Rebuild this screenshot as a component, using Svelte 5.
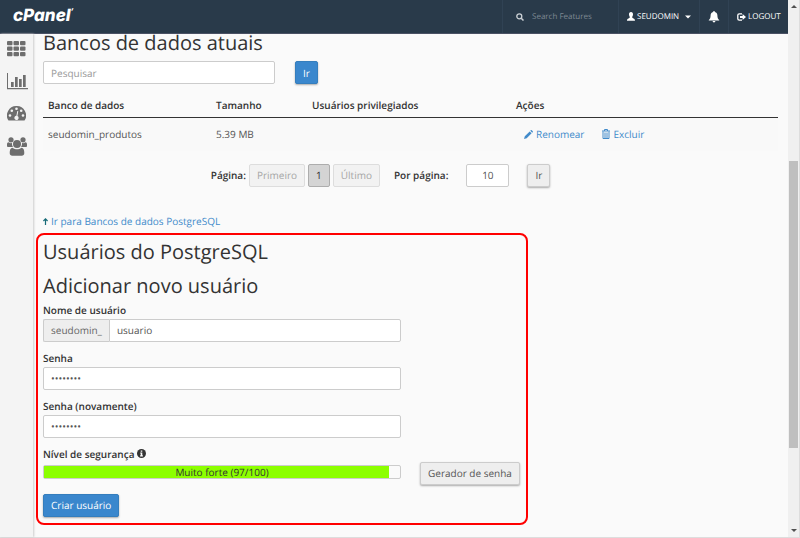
<script lang="ts">
	let search = $state('');
	let perPage = $state('10');
	let username = $state('usuario');
	let password = $state('a7Kp92xQ');
	let passwordAgain = $state('a7Kp92xQ');

	const prefix = 'seudomin_';
	const strength = 97;

	const databases = [{ name: 'seudomin_produtos', size: '5.39 MB', users: '' }];

	const bars = [
		{ x: 4, h: 5 },
		{ x: 8, h: 10 },
		{ x: 12, h: 8 },
		{ x: 16, h: 12 }
	];
</script>

<div class="window">
	<div class="app">
		<header>
			<a class="logo" href="#home">cPanel<sup>’</sup></a>
			<label class="top-search">
				<svg width="8" height="8" viewBox="0 0 8 8" aria-hidden="true">
					<circle cx="3.3" cy="3.3" r="2.5" fill="none" stroke="currentColor" stroke-width="1.3" />
					<path d="M5.2 5.2 7.5 7.5" stroke="currentColor" stroke-width="1.5" />
				</svg>
				<input type="text" placeholder="Search Features" aria-label="Search Features" />
			</label>
			<button class="top-item user" type="button">
				<svg width="8" height="9" viewBox="0 0 8 9" fill="currentColor" aria-hidden="true">
					<path
						d="M4 0C5.400 0 6.100 1 6 2.600 5.900 4 5.300 4.600 5.100 5.300 5.100 6.300 8 6.300 8 8.700H0C0 6.300 2.900 6.300 2.900 5.300 2.700 4.600 2.100 4 2 2.600 1.900 1 2.600 0 4 0Z"
					/>
				</svg>
				<span>SEUDOMIN</span>
				<svg class="caret" width="6" height="4" viewBox="0 0 6 4" fill="currentColor" aria-hidden="true">
					<path d="M0 .5h6L3 3.500Z" />
				</svg>
			</button>
			<button class="top-item bell" type="button" aria-label="Notifications">
				<svg width="12" height="12" viewBox="0 0 12 12" fill="currentColor" aria-hidden="true">
					<path
						d="M6 0c.6 0 .9.4.9.9C8.600 1.300 9.400 2.600 9.400 4.400c0 2.300.6 3.600 1.800 4.500v.7H.8v-.7C2 8 2.600 6.700 2.600 4.400c0-1.800.8-3.100 2.500-3.500C5.100.4 5.400 0 6 0ZM4.600 10h2.800a1.400 1.400 0 0 1-2.800 0Z"
					/>
				</svg>
			</button>
			<a class="top-item logout" href="#logout">
				<svg width="9" height="8" viewBox="0 0 9 8" aria-hidden="true">
					<path
						d="M5 .8H2.200A1.400 1.400 0 0 0 .8 2.200v3.600a1.400 1.400 0 0 0 1.400 1.400H5"
						fill="none"
						stroke="currentColor"
						stroke-width="1.300"
					/>
					<path d="M3 3h2.600V1L9 4 5.600 7V5H3Z" fill="currentColor" />
				</svg>
				<span>LOGOUT</span>
			</a>
		</header>

		<div class="body">
			<nav aria-label="Menu">
				<a href="#home" aria-label="Home">
					<svg width="19" height="16" viewBox="0 0 19 16" fill="currentColor">
						{#each [0, 5.5, 11] as y (y)}
							{#each [0, 6.5, 13] as x (x)}
								<rect {x} {y} width="5.500" height="4.300" rx="1" />
							{/each}
						{/each}
					</svg>
				</a>
				<a href="#stats" aria-label="Statistics">
					<svg width="21" height="17" viewBox="0 0 21 17" fill="currentColor">
						<path d="M0 0h1v15h20v1.300H0Z" />
						{#each bars as bar (bar.x)}
							<rect x={bar.x} y={14 - bar.h} width="2.700" height={bar.h} />
						{/each}
					</svg>
				</a>
				<a href="#dashboard" aria-label="Dashboard">
					<svg width="19" height="15" viewBox="0 0 19 15" fill="currentColor">
						<path d="M9.500 0A9.400 9.400 0 0 0 1.500 14.600H17.500A9.400 9.400 0 0 0 9.500 0Z" />
						<g fill="#f4f4f4">
							<circle cx="3" cy="9.500" r="1.300" />
							<circle cx="4.800" cy="4.800" r="1.300" />
							<circle cx="9.500" cy="2.800" r="1.300" />
							<circle cx="14.200" cy="4.800" r="1.300" />
							<circle cx="16" cy="9.500" r="1.300" />
							<path d="m10.300 5 1 .2-.9 4.800a2.100 2.100 0 1 1-1-.2Z" />
						</g>
					</svg>
				</a>
				<a href="#users" aria-label="User manager">
					<svg width="20" height="19" viewBox="0 0 20 19" fill="currentColor">
						<circle cx="4" cy="2.800" r="2.600" />
						<circle cx="16" cy="2.800" r="2.600" />
						<path
							d="M0 9V7.500C0 6 .6 5.300 1.700 5.300 3 6.400 4 6.300 5 6.100 4.800 8 5.400 9 6 10H1.500C.5 10 0 9.700 0 9ZM20 9V7.500C20 6 19.400 5.300 18.300 5.300 17 6.400 16 6.300 15 6.100 15.200 8 14.600 9 14 10h4.500C19.500 10 20 9.700 20 9Z"
						/>
						<circle cx="10" cy="7" r="4" />
						<path
							d="M5.600 10.800C7 12 8.500 12.300 10 12.300s3-.3 4.400-1.500C16.600 11 17.300 13 17.300 16c0 1.800-1 2.800-2.600 2.800H5.300C3.700 18.800 2.700 17.800 2.700 16c0-3 .7-5 2.900-5.200Z"
						/>
					</svg>
				</a>
			</nav>

			<main>
				<h2 class="first">Bancos de dados atuais</h2>
				<form class="search" onsubmit={(e) => e.preventDefault()}>
					<input type="text" placeholder="Pesquisar" aria-label="Pesquisar" bind:value={search} />
					<button class="btn primary" type="submit">Ir</button>
				</form>

				<table>
					<thead>
						<tr>
							<th class="name">Banco de dados</th>
							<th class="size">Tamanho</th>
							<th class="users">Usuários privilegiados</th>
							<th>Ações</th>
						</tr>
					</thead>
					<tbody>
						{#each databases as db (db.name)}
							<tr>
								<td>{db.name}</td>
								<td>{db.size}</td>
								<td>{db.users}</td>
								<td>
									<div class="actions">
										<a href="#rename">
											<svg width="9" height="9" viewBox="0 0 9 9" fill="currentColor" aria-hidden="true">
												<path d="M0 9 .8 6.300 5.700 1.400l1.900 1.900L2.700 8.200ZM6.300.8 7 .1c.6-.4 2.300 1.300 1.900 1.900l-.7.7Z" />
											</svg>
											Renomear
										</a>
										<a href="#delete">
											<svg width="8" height="10" viewBox="0 0 8 10" fill="none" stroke="currentColor" aria-hidden="true">
												<path d="M0 2h8M2.500 2V.5h3V2M1 2.500v7h6v-7M3 3.500V9M5 3.500V9" />
											</svg>
											Excluir
										</a>
									</div>
								</td>
							</tr>
						{/each}
					</tbody>
				</table>

				<form class="pager" onsubmit={(e) => e.preventDefault()}>
					<strong>Página:</strong>
					<div class="pages">
						<button class="btn" type="button" disabled>Primeiro</button>
						<button class="btn current" type="button" aria-current="page">1</button>
						<button class="btn" type="button" disabled>Último</button>
					</div>
					<label for="per-page">Por página:</label>
					<input id="per-page" type="text" bind:value={perPage} />
					<button class="btn raised" type="submit">Ir</button>
				</form>

				<a class="jump" href="#top">
					<svg width="5" height="9" viewBox="0 -2 5 9" fill="none" stroke="#176b78" aria-hidden="true">
						<path d="M2.500 7V1M.4 3 2.500.8 4.600 3" stroke-width="1.200" />
					</svg>
					Ir para Bancos de dados PostgreSQL
				</a>

				<section class="highlight">
					<h2>Usuários do PostgreSQL</h2>
					<h2>Adicionar novo usuário</h2>
					<form class="new-user" onsubmit={(e) => e.preventDefault()}>
						<div class="field">
							<label for="username">Nome de usuário</label>
							<div class="group">
								<span class="addon">{prefix}</span>
								<input id="username" type="text" bind:value={username} />
							</div>
						</div>
						<div class="field">
							<label for="password">Senha</label>
							<input id="password" type="password" bind:value={password} />
						</div>
						<div class="field">
							<label for="password-again">Senha (novamente)</label>
							<input id="password-again" type="password" bind:value={passwordAgain} />
						</div>
						<div class="strength">
							<div class="strength-label">
								<span id="strength-label">Nível de segurança</span>
								<svg width="9" height="9" viewBox="0 0 9 9" aria-hidden="true">
									<circle cx="4.500" cy="4.500" r="4.500" fill="#333" />
									<path d="M3.700 1.400h1.600v1.400H3.700ZM3.200 3.500h2.100v2.700h.6v1.200H3.100V6.200h.6V4.600h-.5Z" fill="#fafafa" />
								</svg>
							</div>
							<div
								class="meter"
								role="meter"
								aria-labelledby="strength-label"
								aria-valuenow={strength}
								aria-valuemin="0"
								aria-valuemax="100"
							>
								<div class="fill" style="width: {strength}%"></div>
								<span>Muito forte ({strength}/100)</span>
							</div>
						</div>
						<button class="btn raised generate" type="button">Gerador de senha</button>
						<button class="btn primary create" type="submit">Criar usuário</button>
					</form>
				</section>
			</main>
		</div>
	</div>

	<div class="scrollbar" aria-hidden="true">
		<svg width="6" height="3" viewBox="0 0 6 3"><path d="M3 0 6 3H0Z" fill="#505050" /></svg>
		<div class="track"><div class="thumb"></div></div>
		<svg width="6" height="3" viewBox="0 0 6 3"><path d="M3 3 6 0H0Z" fill="#505050" /></svg>
	</div>
</div>

<style>
	:global(body) {
		background: #fafafa;
	}
	.window {
		display: flex;
		min-height: 100vh;
		box-sizing: border-box;
		border-bottom: 1px solid #ddd;
		font-family: 'Open Sans', sans-serif;
		font-size: 10px;
		line-height: 14px;
		text-rendering: geometricPrecision;
		color: #333;
	}
	.window * {
		box-sizing: border-box;
	}
	.app {
		flex: 1;
		min-width: 0;
		display: flex;
		flex-direction: column;
	}
	a {
		color: #428bca;
		text-decoration: none;
	}
	svg {
		display: block;
		flex: none;
	}
	button,
	input {
		font: inherit;
		color: inherit;
		text-rendering: inherit;
	}

	header {
		display: flex;
		height: 34px;
		background: #293a4a;
		border-bottom: 1px solid #4a5164;
		color: #fff;
	}
	.logo {
		margin-right: auto;
		padding-left: 13px;
		color: #fff;
		font-family: Inter, sans-serif;
		font-size: 17px;
		font-weight: 800;
		font-style: italic;
		line-height: 33px;
	}
	.logo sup {
		font-size: 8px;
		line-height: 0;
	}
	.top-search,
	.top-item {
		display: flex;
		align-items: center;
		border: 0;
		border-left: 1px solid #304254;
		background: none;
		color: #fff;
		font-size: 8px;
	}
	.top-search {
		width: 116px;
		padding-left: 13px;
		gap: 8px;
		color: #ccd1d6;
	}
	.top-search input {
		width: 80px;
		padding: 0;
		border: 0;
		background: none;
	}
	.top-search input::placeholder {
		color: #7e8993;
	}
	.user {
		width: 81px;
		padding: 0 8px;
		gap: 2px;
	}
	.caret {
		margin-left: auto;
	}
	.bell {
		width: 29px;
		padding: 0;
		justify-content: center;
	}
	.logout {
		width: 60px;
		padding-left: 8px;
		gap: 2px;
	}

	.body {
		flex: 1;
		display: flex;
	}
	nav {
		flex: none;
		display: flex;
		flex-direction: column;
		align-items: flex-start;
		gap: 16px;
		width: 33px;
		padding: 7px;
		background: #f4f4f4;
		box-shadow: 1px 0 2px #ccc;
	}
	nav a {
		color: #6e6e6e;
	}
	main {
		flex: 1;
		min-width: 0;
		padding: 0 10px;
	}
	h2 {
		margin: 0;
		font-size: 20px;
		font-weight: 400;
		line-height: 34px;
	}
	.first {
		line-height: 18px;
	}

	input {
		height: 23px;
		padding: 0 7px;
		border: 1px solid #ccc;
		border-radius: 2px;
		background: #fff;
		color: #555;
		outline: none;
	}
	input::placeholder {
		color: #999;
	}
	.btn {
		height: 23px;
		padding: 0 7px;
		border: 1px solid #ccc;
		border-radius: 2px;
		background: #eee;
		color: #555;
		white-space: nowrap;
	}
	.btn:disabled {
		border-color: #ddd;
		background: #f2f2f2;
		color: #a5a5a5;
	}
	.btn.primary {
		border-color: #357ebd;
		background: #3a87cd;
		color: #fff;
		box-shadow: 0 1px 2px #aaa;
	}
	.btn.raised {
		box-shadow: 0 1px 2px #aaa;
	}
	.btn.current {
		border-color: #adadad;
		background: #d4d4d4;
		color: #333;
	}

	.search {
		display: flex;
		gap: 20px;
		margin: 9px 0 10px;
	}
	.search input {
		width: 232px;
	}

	table {
		width: 100%;
		border-collapse: collapse;
		table-layout: fixed;
	}
	th,
	td {
		padding: 4px 5px;
		text-align: left;
	}
	th {
		padding-bottom: 5px;
		border-bottom: 1px solid #333;
		color: #333;
		font-weight: 600;
	}
	td {
		height: 33px;
		background: #f9f9f9;
		color: #555;
	}
	.name {
		width: 168px;
	}
	.size {
		width: 96px;
	}
	.users {
		width: 204px;
	}
	.actions {
		display: flex;
		gap: 18px;
		padding-left: 8px;
	}
	.actions a,
	.jump {
		display: flex;
		align-items: center;
		gap: 3px;
	}

	.pager {
		display: flex;
		align-items: center;
		justify-content: center;
		margin: 13px 0 27px;
		padding-right: 60px;
	}
	.pages {
		display: flex;
		gap: 3px;
		margin: 0 14px 0 3px;
	}
	.pager input {
		width: 43px;
		margin: 0 18px;
		text-align: center;
	}
	label,
	.pager strong {
		font-weight: 600;
	}
	.top-search {
		font-weight: 400;
	}

	.highlight {
		width: fit-content;
		margin: 5px 0 12px -7px;
		padding: 0 6px 6px 5px;
		border: 2px solid #f00;
		border-radius: 8px;
	}
	.new-user {
		display: grid;
		grid-template-columns: 358px auto;
		column-gap: 19px;
		row-gap: 9px;
	}
	.field,
	.strength,
	.create {
		grid-column: 1;
	}
	.field label {
		display: block;
		margin-bottom: 2px;
	}
	.field > input {
		width: 100%;
	}
	.group {
		display: flex;
	}
	.addon {
		padding: 0 7px;
		border: 1px solid #ccc;
		border-right: 0;
		border-radius: 2px 0 0 2px;
		background: #eee;
		color: #666;
		line-height: 21px;
	}
	.group input {
		flex: 1;
		min-width: 0;
		border-radius: 0 2px 2px 0;
	}
	.strength-label {
		display: flex;
		align-items: center;
		gap: 3px;
		margin-bottom: 4px;
		font-weight: 600;
	}
	.meter {
		position: relative;
		height: 14px;
		margin-bottom: 6px;
		border: 1px solid #ccc;
		border-radius: 2px;
		line-height: 12px;
		text-align: center;
	}
	.fill {
		position: absolute;
		inset: 0 auto 0 0;
		background: #8cff00;
	}
	.meter span {
		position: relative;
	}
	.generate {
		align-self: end;
	}
	.create {
		justify-self: start;
	}

	.scrollbar {
		flex: none;
		display: flex;
		flex-direction: column;
		align-items: center;
		width: 12px;
		padding: 5px 0;
		border-right: 1px solid #ddd;
		background: #f0f0f0;
	}
	.track {
		flex: 1;
		display: flex;
		flex-direction: column;
		justify-content: center;
		width: 9px;
		padding-top: 72px;
	}
	.thumb {
		height: 64%;
		background: #bfbfbf;
	}
</style>
